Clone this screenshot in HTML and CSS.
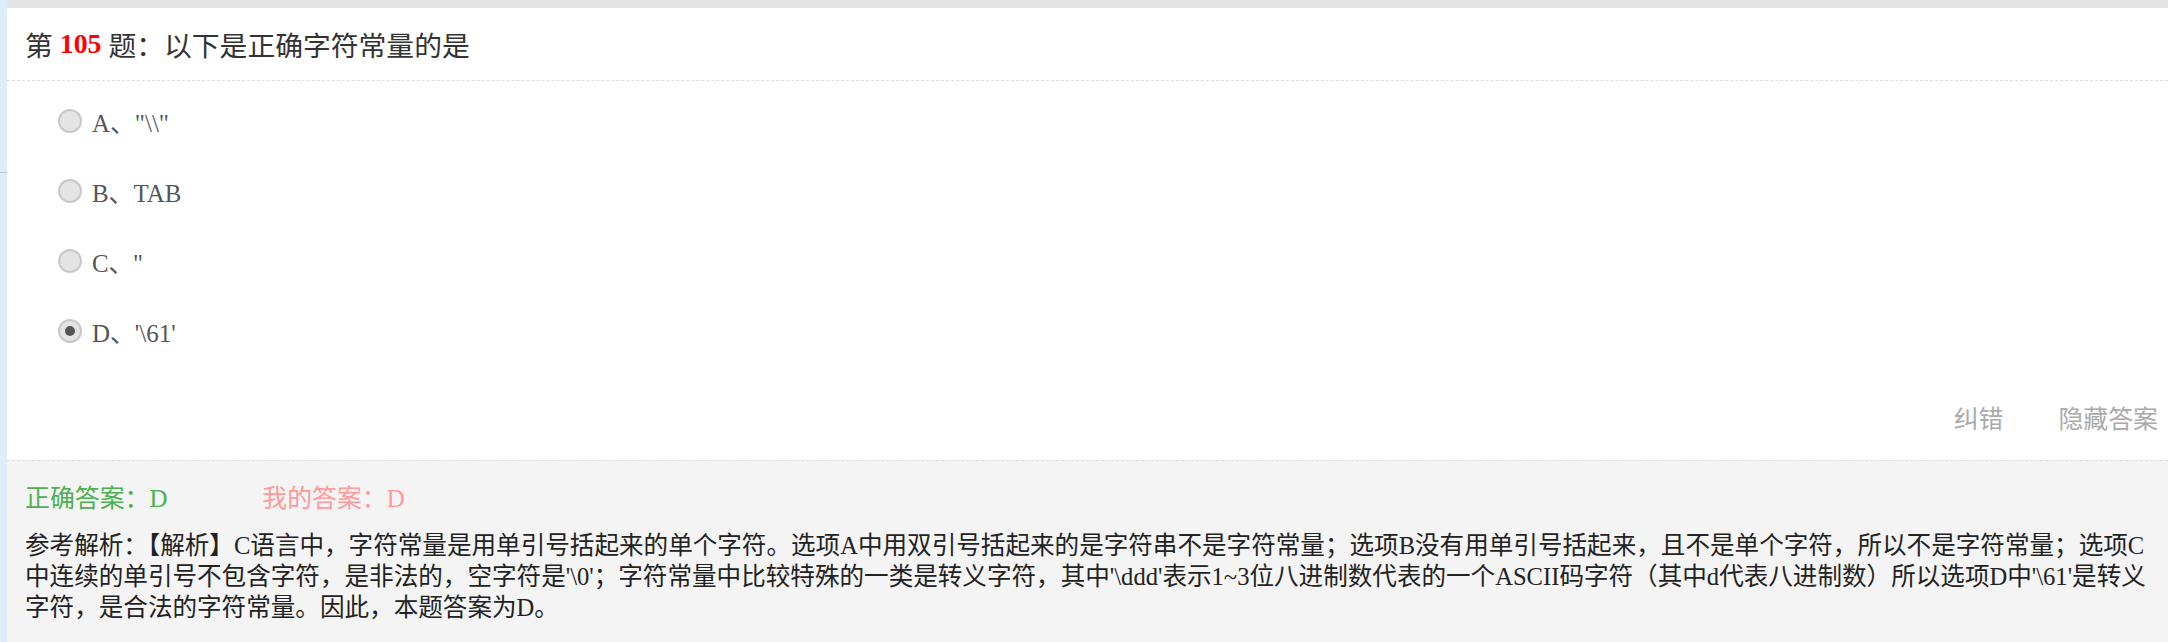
FILE: index.html
```html
<!DOCTYPE html>
<html lang="zh-CN">
<head>
    <meta charset="UTF-8">
    <meta name="viewport" content="width=device-width, initial-scale=1.0">
    <title>第105题</title>
    <link rel="stylesheet" href="styles.css">
</head>
<body>

    <div class="side-strip">
        <div class="side-mark"></div>
    </div>

    <div class="main">
        <div class="top-bar"></div>

        <div class="question-title">
            第&nbsp;<span class="q-num">105</span>&nbsp;题：以下是正确字符常量的是
        </div>

        <ul class="options">
            <li class="option"><span class="radio"></span><span class="opt-text">A、"\\"</span></li>
            <li class="option"><span class="radio"></span><span class="opt-text">B、TAB</span></li>
            <li class="option"><span class="radio"></span><span class="opt-text">C、''</span></li>
            <li class="option"><span class="radio checked"></span><span class="opt-text">D、'\61'</span></li>
        </ul>

        <div class="actions">
            <a class="action-link">纠错</a>
            <a class="action-link">隐藏答案</a>
        </div>

        <div class="answer-box">
            <div class="answer-line">
                <span class="right-answer">正确答案：D</span>
                <span class="my-answer">我的答案：D</span>
            </div>
            <p class="analysis">参考解析：【解析】C语言中，字符常量是用单引号括起来的单个字符。选项A中用双引号括起来的是字符串不是字符常量；选项B没有用单引号括起来，且不是单个字符，所以不是字符常量；选项C中连续的单引号不包含字符，是非法的，空字符是'\0'；字符常量中比较特殊的一类是转义字符，其中'\ddd'表示1~3位八进制数代表的一个ASCII码字符（其中d代表八进制数）所以选项D中'\61'是转义字符，是合法的字符常量。因此，本题答案为D。</p>
        </div>
    </div>

</body>
</html>
```

FILE: styles.css
```css
body {
    margin: 0;
    display: flex;
    min-height: 642px;
    font-family: "Liberation Serif", "Noto Sans CJK SC", serif;
    color: #333;
    background-color: #fff;
}
.side-strip {
    width: 7px;
    flex-shrink: 0;
    background-color: #dcedfb;
}
.side-mark {
    margin-top: 172px;
    height: 1px;
    background-color: #b9bec4;
}
.main {
    flex: 1;
    display: flex;
    flex-direction: column;
}
.top-bar {
    height: 8px;
    background-color: #e3e4e6;
}
.question-title {
    height: 72px;
    display: flex;
    align-items: center;
    padding-left: 18px;
    font-size: 27.8px;
    color: #333;
    border-bottom: 1px dashed #dcdcdc;
}
.q-num {
    color: #f00;
    font-weight: bold;
}
.options {
    list-style: none;
    margin: 0;
    padding: 5px 0 29px 51px;
}
.option {
    height: 70px;
    display: flex;
    align-items: center;
    font-size: 24.9px;
    color: #555;
}
.radio {
    width: 20px;
    height: 20px;
    border: 2px solid #c8c8c8;
    border-radius: 50%;
    background-color: #e4e4e4;
    margin-right: 10px;
    display: flex;
    align-items: center;
    justify-content: center;
}
.radio.checked::after {
    content: "";
    width: 10px;
    height: 10px;
    border-radius: 50%;
    background-color: #555;
}
.actions {
    height: 44px;
    margin-bottom: 21px;
    display: flex;
    justify-content: flex-end;
    align-items: center;
    gap: 55px;
    padding-right: 10px;
    font-family: "Noto Sans CJK SC", sans-serif;
    font-size: 24.9px;
}
.action-link {
    color: #aaa;
    cursor: pointer;
}
.answer-box {
    flex: 1;
    background-color: #f4f4f4;
    border-top: 1px dashed #dcdcdc;
    padding: 22px 0 14px 18px;
    font-size: 24.9px;
}
.answer-line {
    line-height: 31px;
}
.right-answer {
    color: #4cb050;
    display: inline-block;
    width: 231px;
}
.my-answer {
    color: #ff9a9a;
}
.analysis {
    margin: 16px 0 0;
    font-size: 24.58px;
    line-height: 31px;
    color: #222;
}
```
